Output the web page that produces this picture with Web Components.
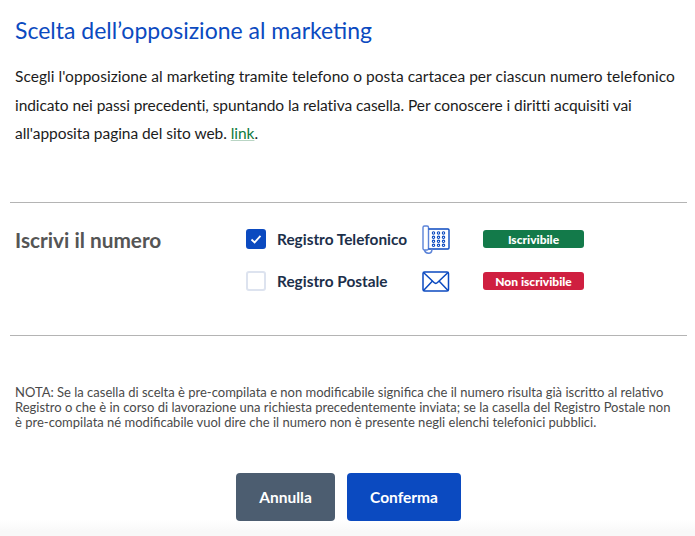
<!DOCTYPE html>
<html lang="it">
<head>
<meta charset="utf-8">
<title>Scelta opposizione</title>
<style>
  html, body { margin: 0; background: #fff; }
  body { font-family: "Lato", "Noto Sans", sans-serif; height: 536px; overflow: hidden; }
  a { color: #0f7a3c; text-decoration: underline; text-decoration-color: #b9d5c4; }
</style>
</head>
<body>
<template id="tpl-row">
  <style>
    :host { display: grid; grid-template-columns: 20px 156px 28px auto; align-items: center; height: 42px; }
    .box { width: 16px; height: 16px; border: 2px solid #dde3ef; border-radius: 3px; display: flex; align-items: center; justify-content: center; background: #fff; }
    :host([checked]) .box { background: #0b4ac0; border-color: #0b4ac0; }
    .box svg { display: none; }
    :host([checked]) .box svg { display: block; }
    .label { font-size: 15.4px; font-weight: 700; color: #1c2f4a; padding-left: 11px; white-space: nowrap; }
    .pill { margin-left: 33px; width: 101px; height: 18px; border-radius: 3px; color: #fff; font-size: 12px; font-weight: 900; display: flex; align-items: center; justify-content: center; }
    ::slotted(svg) { display: block; }
  </style>
  <span class="box"><svg width="14" height="14" viewBox="0 0 14 14"><path d="M2.5 7.5 L5.6 10.4 L11.5 3.8" fill="none" stroke="#fff" stroke-width="1.8"/></svg></span>
  <span class="label"></span>
  <slot></slot>
  <span class="pill"></span>
</template>

<opposition-panel>
  <h1 slot="title">Scelta dell’opposizione al marketing</h1>
  <span slot="intro"><span style="letter-spacing:.04px">Scegli l'opposizione al marketing tramite telefono o posta cartacea per ciascun numero telefonico</span><br><span style="letter-spacing:-.07px">indicato nei passi precedenti, spuntando la relativa casella. Per conoscere i diritti acquisiti vai</span><br><span style="letter-spacing:-.05px">all'apposita pagina del sito web. <a href="#">link</a>.</span></span>
  <span slot="heading">Iscrivi il numero</span>
  <register-row slot="rows" label="Registro Telefonico" status="Iscrivibile" color="#137a4a" checked>
    <svg width="28" height="29" viewBox="0 0 28 29" fill="none" stroke="#0b4ac0" stroke-width="1.4">
      <path d="M1 2.500a1.500 1.500 0 0 1 1.500-1.500h2.500a1.500 1.500 0 0 1 1.500 1.500v21a1.500 1.500 0 0 1-1.500 1.500h-2.500a1.500 1.500 0 0 1-1.500-1.500z" stroke="#5b83d8"/>
      <path d="M6.500 4h19.500a1 1 0 0 1 1 1v18a1 1 0 0 1-1 1h-19.500"/>
      <path d="M2.500 25c.5 2.500 3 3.500 5.500 3 1.500-.3 2-2 2-4" stroke="#5b83d8"/>
      <g stroke-width="1.100">
        <circle cx="11.500" cy="8" r="1.200"/><circle cx="16.500" cy="8" r="1.200"/><circle cx="21.500" cy="8" r="1.200"/>
        <circle cx="11.500" cy="12.300" r="1.200"/><circle cx="16.500" cy="12.300" r="1.200"/><circle cx="21.500" cy="12.300" r="1.200"/>
        <circle cx="11.500" cy="16.300" r="1.200"/><circle cx="16.500" cy="16.300" r="1.200"/><circle cx="21.500" cy="16.300" r="1.200"/>
        <circle cx="11.500" cy="20.300" r="1.200"/><circle cx="16.500" cy="20.300" r="1.200"/><circle cx="21.500" cy="20.300" r="1.200"/>
      </g>
    </svg>
  </register-row>
  <register-row slot="rows" label="Registro Postale" status="Non iscrivibile" color="#cf1f40">
    <svg width="28" height="21" viewBox="0 0 28 21" fill="none" stroke="#0b4ac0" stroke-width="1.500">
      <rect x="1" y="1" width="25.500" height="19" rx="1.500"/>
      <path d="M1.500 1.500 L12 11.500 Q13.750 13.200 15.500 11.500 L26 1.500"/>
      <path d="M1.500 19.500 L10.500 10 M26 19.500 L17 10"/>
    </svg>
  </register-row>
  <span slot="note">NOTA: Se la casella di scelta è pre-compilata e non modificabile significa che il numero risulta già iscritto al relativo<br>Registro o che è in corso di lavorazione una richiesta precedentemente inviata; se la casella del Registro Postale non<br>è pre-compilata né modificabile vuol dire che il numero non è presente negli elenchi telefonici pubblici.</span>
  <action-button slot="actions" color="#4c5d70" width="99">Annulla</action-button>
  <action-button slot="actions" color="#0b4ac0" width="114">Conferma</action-button>
</opposition-panel>

<script>
  class OppositionPanel extends HTMLElement {
    connectedCallback() {
      this.attachShadow({ mode: 'open' });
      this.shadowRoot.innerHTML = `
        <style>
          :host { display: block; height: 536px; background: linear-gradient(#fff 520px, #f8f8f8 532px); }
          .top { padding: 13px 15px 0; }
          ::slotted(h1) { margin: 0; font-size: 23px; line-height: 34px; font-weight: 400; color: #0b4ac0; }
          .intro { margin-top: 15px; font-size: 15.5px; line-height: 28.5px; color: #1c1c1c; height: 140px; }
          ::slotted(span[slot="intro"]) { display: block; white-space: nowrap; }
          .choice { margin: 0 8px 0 10px; height: 117px; border-top: 1px solid #b4b4b4; border-bottom: 1px solid #b4b4b4; display: grid; grid-template-columns: 231px 1fr; padding-top: 15px; padding-left: 5px; }
          .heading { font-size: 20.8px; line-height: 44px; font-weight: 700; color: #555; }
          .note { margin: 49px 15px 0; font-size: 13px; line-height: 15px; color: #4a4a4a; height: 45px; white-space: nowrap; }
          .actions { margin-top: 43px; display: flex; justify-content: center; gap: 12px; padding-left: 2px; }
        </style>
        <div class="top">
          <slot name="title"></slot>
          <div class="intro"><slot name="intro"></slot></div>
        </div>
        <div class="choice">
          <div class="heading"><slot name="heading"></slot></div>
          <div class="rows"><slot name="rows"></slot></div>
        </div>
        <div class="note"><slot name="note"></slot></div>
        <div class="actions"><slot name="actions"></slot></div>
      `;
    }
  }

  class RegisterRow extends HTMLElement {
    connectedCallback() {
      this.attachShadow({ mode: 'open' });
      this.shadowRoot.appendChild(document.getElementById('tpl-row').content.cloneNode(true));
      this.shadowRoot.querySelector('.label').textContent = this.getAttribute('label');
      const pill = this.shadowRoot.querySelector('.pill');
      pill.textContent = this.getAttribute('status');
      pill.style.background = this.getAttribute('color');
    }
  }

  class ActionButton extends HTMLElement {
    connectedCallback() {
      this.attachShadow({ mode: 'open' });
      this.shadowRoot.innerHTML = `
        <style>
          :host { display: block; }
          button { display: block; height: 48px; border: 0; border-radius: 4px; color: #fff; font: 700 15.5px "Lato", "Noto Sans", sans-serif; cursor: pointer; }
        </style>
        <button><slot></slot></button>
      `;
      const b = this.shadowRoot.querySelector('button');
      b.style.background = this.getAttribute('color');
      b.style.width = this.getAttribute('width') + 'px';
    }
  }

  customElements.define('opposition-panel', OppositionPanel);
  customElements.define('register-row', RegisterRow);
  customElements.define('action-button', ActionButton);
</script>
</body>
</html>
